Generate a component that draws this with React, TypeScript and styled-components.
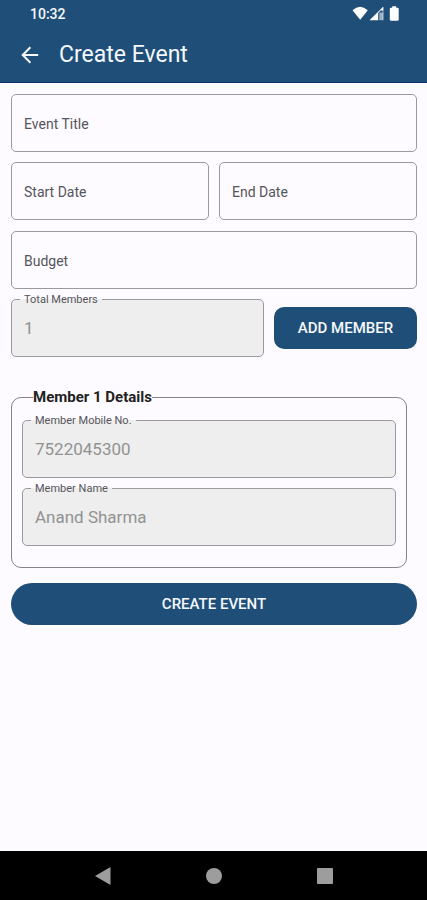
import { useId, useState } from "react";
import type { FormEvent } from "react";
import styled, { createGlobalStyle, css } from "styled-components";

const color = {
  brand: "#1f4f78",
  brandEdge: "#0b2f66",
  page: "#fdfbff",
  outline: "#9a999c",
  groupOutline: "#858487",
  disabled: "#eeeeee",
  label: "#56555a",
  value: "#929292",
};

const GlobalStyle = createGlobalStyle`
  * { box-sizing: border-box; }
  body {
    margin: 0;
    background: ${color.page};
    font-family: Roboto, "Liberation Sans", sans-serif;
  }
`;

const Screen = styled.div`
  display: flex;
  flex-direction: column;
  min-height: 100vh;
  background: ${color.page};
`;

const Header = styled.header`
  background: ${color.brand};
  border-bottom: 1px solid ${color.brandEdge};
  color: #f5f8fc;
`;

const StatusBar = styled.div`
  display: flex;
  align-items: center;
  justify-content: space-between;
  height: 28px;
  padding: 0 27px 0 30px;
  font-size: 14px;
  font-weight: 500;
`;

const StatusIcons = styled.svg`
  display: block;
  width: 48px;
  height: 16px;
`;

const AppBar = styled.div`
  display: flex;
  align-items: center;
  gap: 16px;
  height: 54px;
  padding: 0 16px;
`;

const BackButton = styled.button`
  display: grid;
  place-items: center;
  width: 27px;
  height: 32px;
  padding: 0;
  border: 0;
  background: none;
  color: inherit;
  cursor: pointer;
`;

const Title = styled.h1`
  margin: 0;
  font-size: 23px;
  font-weight: 400;
  line-height: 28px;
`;

const Form = styled.form`
  flex: 1;
  padding: 11px 10px 16px 11px;
`;

const FieldStack = styled.div`
  display: grid;
  gap: 10px;
  margin-bottom: 11px;
`;

const DateRow = styled.div`
  display: grid;
  grid-template-columns: 1fr 1fr;
  gap: 10px;
`;

const MemberRow = styled.div`
  display: grid;
  grid-template-columns: minmax(0, 1fr) 143px;
  align-items: center;
  gap: 10px;
`;

const FieldBox = styled.div`
  position: relative;
  min-width: 0;
`;

const FieldInput = styled.input`
  display: block;
  width: 100%;
  height: 58px;
  padding: 0 12px;
  border: 1px solid ${color.outline};
  border-radius: 5px;
  background: transparent;
  color: #222222;
  font: 400 17px/24px Roboto, "Liberation Sans", sans-serif;

  &:disabled {
    background: ${color.disabled};
    color: ${color.value};
    -webkit-text-fill-color: ${color.value};
    opacity: 1;
  }
`;

const FieldLabel = styled.label<{ $raised: boolean }>`
  position: absolute;
  color: ${color.label};
  pointer-events: none;
  white-space: nowrap;

  ${({ $raised }) =>
    $raised
      ? css`
          top: -6px;
          left: 9px;
          padding: 0 4px;
          background: linear-gradient(${color.page} 6px, transparent 6px);
          font-size: 11px;
          line-height: 13px;

          &::before {
            content: "";
            position: absolute;
            z-index: -1;
            inset: 6px 0 auto;
            height: 1px;
            background: ${color.disabled};
          }
        `
      : css`
          top: 20px;
          left: 13px;
          font-size: 14px;
          line-height: 20px;
        `}
`;

const LabelLayer = styled.div`
  position: absolute;
  top: 0;
  left: 0;
  isolation: isolate;
`;

const AddButton = styled.button`
  height: 42px;
  border: 0;
  border-radius: 10px;
  background: ${color.brand};
  color: #f5f8fc;
  font: 500 15px/20px Roboto, "Liberation Sans", sans-serif;
  cursor: pointer;
`;

const MemberGroup = styled.fieldset`
  min-width: 0;
  margin: 32px 10px 0 0;
  padding: 15px 10px 21px;
  border: 1px solid ${color.groupOutline};
  border-radius: 10px;
`;

const MemberLegend = styled.legend`
  height: 16px;
  margin-left: 11px;
  padding: 0;
  color: #222222;
  font-size: 15px;
  font-weight: 700;
  line-height: 16px;
`;

const MemberFields = styled.div`
  display: grid;
  gap: 10px;
`;

const SubmitButton = styled(AddButton)`
  display: block;
  width: 100%;
  margin-top: 15px;
  border-radius: 21px;
`;

const NavBar = styled.nav`
  display: flex;
  align-items: center;
  justify-content: center;
  gap: 87px;
  height: 49px;
  background: #000000;
`;

const NavButton = styled.button`
  display: block;
  width: 24px;
  height: 24px;
  padding: 0;
  border: 0;
  background: none;
  color: #9d9d9d;
  cursor: pointer;
`;

type FieldProps = {
  label: string;
  initial?: string;
  disabled?: boolean;
  value?: string;
};

function Field({ label, initial = "", disabled = false, value }: FieldProps) {
  const id = useId();
  const [text, setText] = useState(initial);
  const [focused, setFocused] = useState(false);
  const shown = value ?? text;

  return (
    <FieldBox>
      <FieldInput
        id={id}
        type="text"
        value={shown}
        disabled={disabled}
        onChange={(e) => setText(e.target.value)}
        onFocus={() => setFocused(true)}
        onBlur={() => setFocused(false)}
      />
      <LabelLayer>
        <FieldLabel htmlFor={id} $raised={focused || shown !== ""}>
          {label}
        </FieldLabel>
      </LabelLayer>
    </FieldBox>
  );
}

type Member = { mobile: string; name: string };

export default function App() {
  const [members, setMembers] = useState<Member[]>([
    { mobile: "7522045300", name: "Anand Sharma" },
  ]);

  const addMember = () => setMembers([...members, { mobile: "", name: "" }]);
  const submit = (e: FormEvent) => e.preventDefault();

  return (
    <Screen>
      <GlobalStyle />
      <Header>
        <StatusBar>
          <span>10:32</span>
          <StatusIcons viewBox="0 0 48 16" fill="#ffffff" aria-hidden="true">
            <path d="M0.5 4.2Q8 -2.8 15.8 4.2L8.2 13.8Z" />
            <path d="M17.5 14.2L31.2 0.8V4.5H28.5L26.2 7V14.2Z" />
            <path d="M27.3 6.5H31.2V14.2H27.3Z" fillOpacity="0.55" />
            <path d="M31 1V14.2" stroke="#ffffff" strokeOpacity="0.5" />
            <path d="M40.2 0.3H44.2V1.8H45.5Q46.7 1.8 46.7 3V13.5Q46.7 14.8 45.4 14.8H39Q37.8 14.8 37.8 13.5V3Q37.8 1.8 39 1.8H40.2Z" />
          </StatusIcons>
        </StatusBar>
        <AppBar>
          <BackButton type="button" aria-label="Back">
            <svg width="18" height="18" viewBox="0 0 18 18" fill="none" stroke="currentColor" strokeWidth="2">
              <path d="M17.2 9H2M9.4 1.3L1.7 9L9.4 16.7" />
            </svg>
          </BackButton>
          <Title>Create Event</Title>
        </AppBar>
      </Header>

      <Form onSubmit={submit}>
        <FieldStack>
          <Field label="Event Title" />
          <DateRow>
            <Field label="Start Date" />
            <Field label="End Date" />
          </DateRow>
        </FieldStack>
        <FieldStack>
          <Field label="Budget" />
          <MemberRow>
            <Field label="Total Members" value={String(members.length)} disabled />
            <AddButton type="button" onClick={addMember}>
              ADD MEMBER
            </AddButton>
          </MemberRow>
        </FieldStack>

        {members.map((member, i) => (
          <MemberGroup key={i}>
            <MemberLegend>Member {i + 1} Details</MemberLegend>
            <MemberFields>
              <Field label="Member Mobile No." initial={member.mobile} disabled={member.mobile !== ""} />
              <Field label="Member Name" initial={member.name} disabled={member.name !== ""} />
            </MemberFields>
          </MemberGroup>
        ))}

        <SubmitButton type="submit">CREATE EVENT</SubmitButton>
      </Form>

      <NavBar aria-label="System">
        <NavButton type="button" aria-label="Back">
          <svg width="24" height="24" viewBox="0 0 24 24" fill="currentColor">
            <path d="M4 12L19.5 3V21Z" />
          </svg>
        </NavButton>
        <NavButton type="button" aria-label="Home">
          <svg width="24" height="24" viewBox="0 0 24 24" fill="currentColor">
            <circle cx="12" cy="12" r="8" />
          </svg>
        </NavButton>
        <NavButton type="button" aria-label="Recent apps">
          <svg width="24" height="24" viewBox="0 0 24 24" fill="currentColor">
            <rect x="4" y="4" width="16" height="16" rx="1" />
          </svg>
        </NavButton>
      </NavBar>
    </Screen>
  );
}
